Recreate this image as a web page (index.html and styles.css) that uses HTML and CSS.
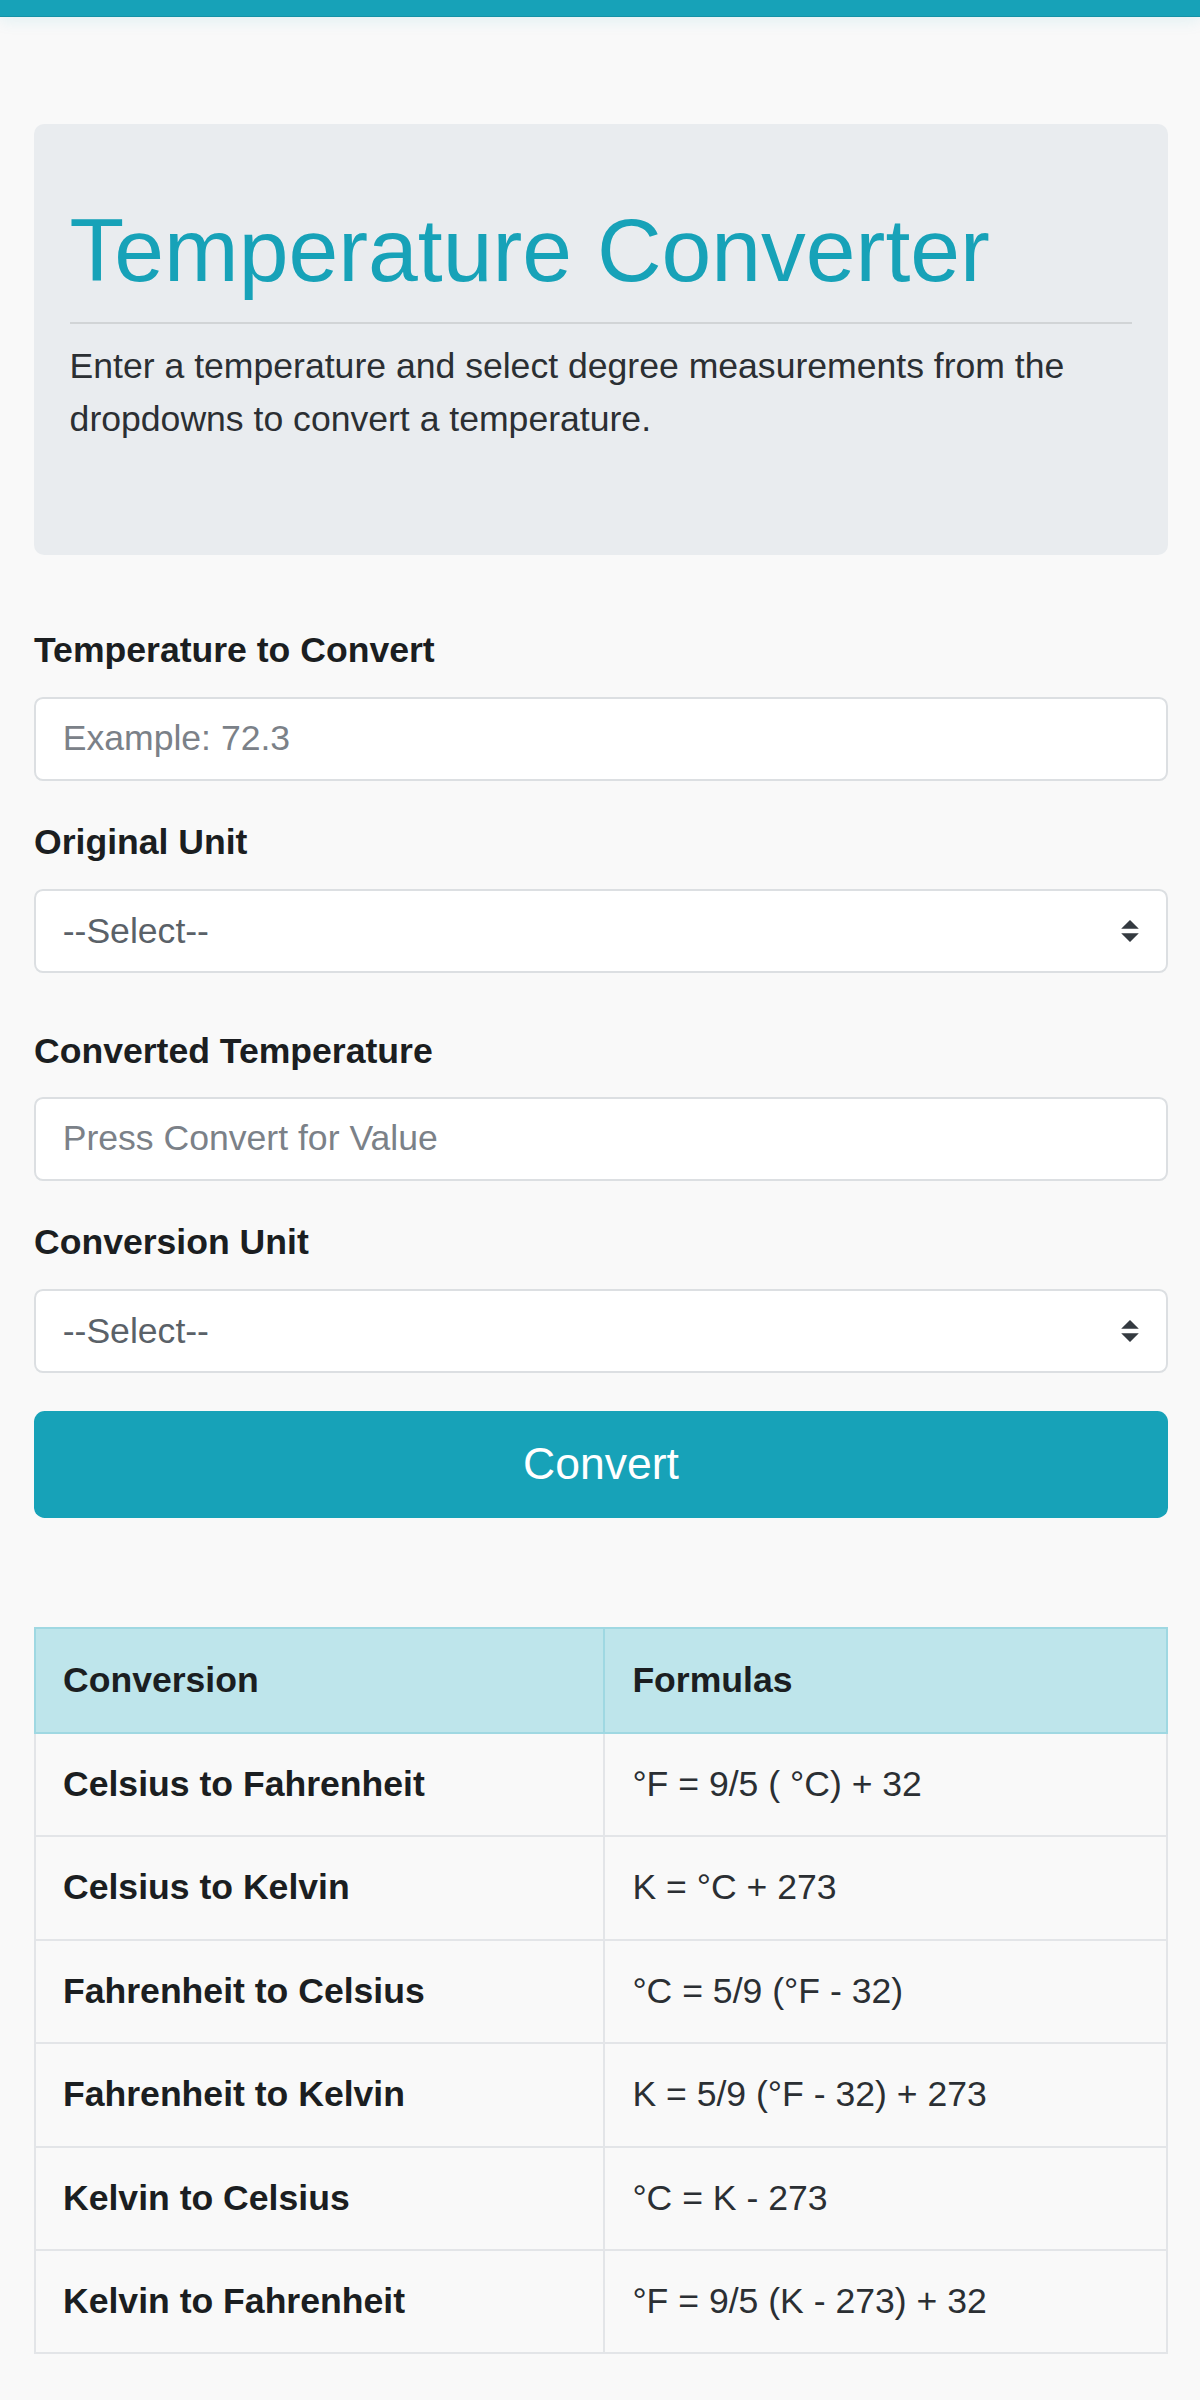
FILE: index.html
```html
<!DOCTYPE html>
<html lang="en">
<head>
<meta charset="utf-8">
<title>Temperature Converter</title>
<link rel="stylesheet" href="styles.css">
</head>
<body>
<div class="topbar"></div>
<main class="page">
  <section class="jumbotron">
    <h1 class="title">Temperature Converter</h1>
    <hr class="divider">
    <p class="lead-text">Enter a temperature and select degree measurements from the dropdowns to convert a temperature.</p>
  </section>

  <form class="converter">
    <div class="field">
      <label class="field-label" for="temp">Temperature to Convert</label>
      <input class="control" id="temp" type="text" placeholder="Example: 72.3">
    </div>
    <div class="field field-wide">
      <label class="field-label" for="from">Original Unit</label>
      <div class="select-wrap">
        <select class="control select" id="from">
          <option>--Select--</option>
          <option>Celsius</option>
          <option>Fahrenheit</option>
          <option>Kelvin</option>
        </select>
        <svg class="caret" viewBox="0 0 4 5" aria-hidden="true"><path d="M2 0L0 2h4zm0 5L0 3h4z"/></svg>
      </div>
    </div>
    <div class="field">
      <label class="field-label" for="result">Converted Temperature</label>
      <input class="control" id="result" type="text" placeholder="Press Convert for Value" readonly>
    </div>
    <div class="field field-last">
      <label class="field-label" for="to">Conversion Unit</label>
      <div class="select-wrap">
        <select class="control select" id="to">
          <option>--Select--</option>
          <option>Celsius</option>
          <option>Fahrenheit</option>
          <option>Kelvin</option>
        </select>
        <svg class="caret" viewBox="0 0 4 5" aria-hidden="true"><path d="M2 0L0 2h4zm0 5L0 3h4z"/></svg>
      </div>
    </div>
    <button class="btn-convert" type="button">Convert</button>
  </form>

  <table class="formulas">
    <colgroup>
      <col class="col-conv">
      <col class="col-form">
    </colgroup>
    <thead>
      <tr><th>Conversion</th><th>Formulas</th></tr>
    </thead>
    <tbody>
      <tr><th>Celsius to Fahrenheit</th><td>°F = 9/5 ( °C) + 32</td></tr>
      <tr><th>Celsius to Kelvin</th><td>K = °C + 273</td></tr>
      <tr><th>Fahrenheit to Celsius</th><td>°C = 5/9 (°F - 32)</td></tr>
      <tr><th>Fahrenheit to Kelvin</th><td>K = 5/9 (°F - 32) + 273</td></tr>
      <tr><th>Kelvin to Celsius</th><td>°C = K - 273</td></tr>
      <tr><th>Kelvin to Fahrenheit</th><td>°F = 9/5 (K - 273) + 32</td></tr>
    </tbody>
  </table>
</main>
</body>
</html>
```

FILE: styles.css
```css
html, body {
  margin: 0;
  padding: 0;
}

body {
  background: #f9f9f9;
  font-family: "Liberation Sans", Arial, sans-serif;
  font-size: 35.6px;
  line-height: 53.4px;
  color: #212529;
}

.topbar {
  height: 16px;
  background: #17a2b8;
  border-bottom: 1px solid #1592a6;
  box-shadow: 0 4px 16px rgba(23, 162, 184, 0.10);
}

.page {
  padding: 107px 32px 40px 34px;
}

.jumbotron {
  background: #e9ecef;
  border-radius: 10px;
  padding: 73px 35.6px 73px;
  margin-bottom: 69px;
}

.title {
  margin: 0;
  font-size: 89.5px;
  font-weight: 400;
  line-height: 106px;
  color: #17a2b8;
}

.divider {
  margin: 19px 0 16px;
  border: 0;
  border-top: 2px solid rgba(0, 0, 0, 0.1);
  height: 0;
}

.lead-text {
  margin: 0 0 35.6px;
  color: #2b2f33;
}

.converter {
  margin: 0 0 109px;
}

.field {
  margin-bottom: 35.3px;
}

.field-wide {
  margin-bottom: 52px;
}

.field-last {
  margin-bottom: 38px;
}

.field-label {
  display: block;
  font-weight: 700;
  margin-bottom: 19px;
  color: #1b1e21;
}

.control {
  display: block;
  width: 100%;
  height: 84px;
  box-sizing: border-box;
  margin: 0;
  padding: 0 26.7px;
  border: 2px solid #dcdfe2;
  border-radius: 8.9px;
  background: #fff;
  font-family: inherit;
  font-size: 35.6px;
  color: #495057;
  outline: none;
}

.control::placeholder {
  color: #7b8188;
  opacity: 1;
}

.select-wrap {
  position: relative;
}

.select {
  -webkit-appearance: none;
  appearance: none;
  color: #5a6168;
}

.caret {
  position: absolute;
  right: 29px;
  top: 50%;
  width: 18px;
  height: 22px;
  margin-top: -11px;
  fill: #343a40;
  pointer-events: none;
}

.btn-convert {
  display: block;
  width: 100%;
  height: 107px;
  margin: 0;
  padding: 0;
  border: 0;
  border-radius: 10.7px;
  background: #17a2b8;
  color: #fff;
  font-family: inherit;
  font-size: 44.5px;
  line-height: 66.8px;
  text-align: center;
}

.formulas {
  width: 100%;
  border-collapse: collapse;
  table-layout: fixed;
}

.col-conv {
  width: 50.3%;
}

.formulas th,
.formulas td {
  padding: 24px 27px;
  line-height: 53.4px;
  border: 2px solid #e3e5e8;
  text-align: left;
  vertical-align: middle;
}

.formulas th {
  font-weight: 700;
  color: #1b1e21;
}

.formulas td {
  font-weight: 400;
  color: #2b2f33;
}

.formulas thead th {
  background: #bee5eb;
  border-color: #9fd8e2;
  padding-top: 25px;
  padding-bottom: 25px;
}
```
